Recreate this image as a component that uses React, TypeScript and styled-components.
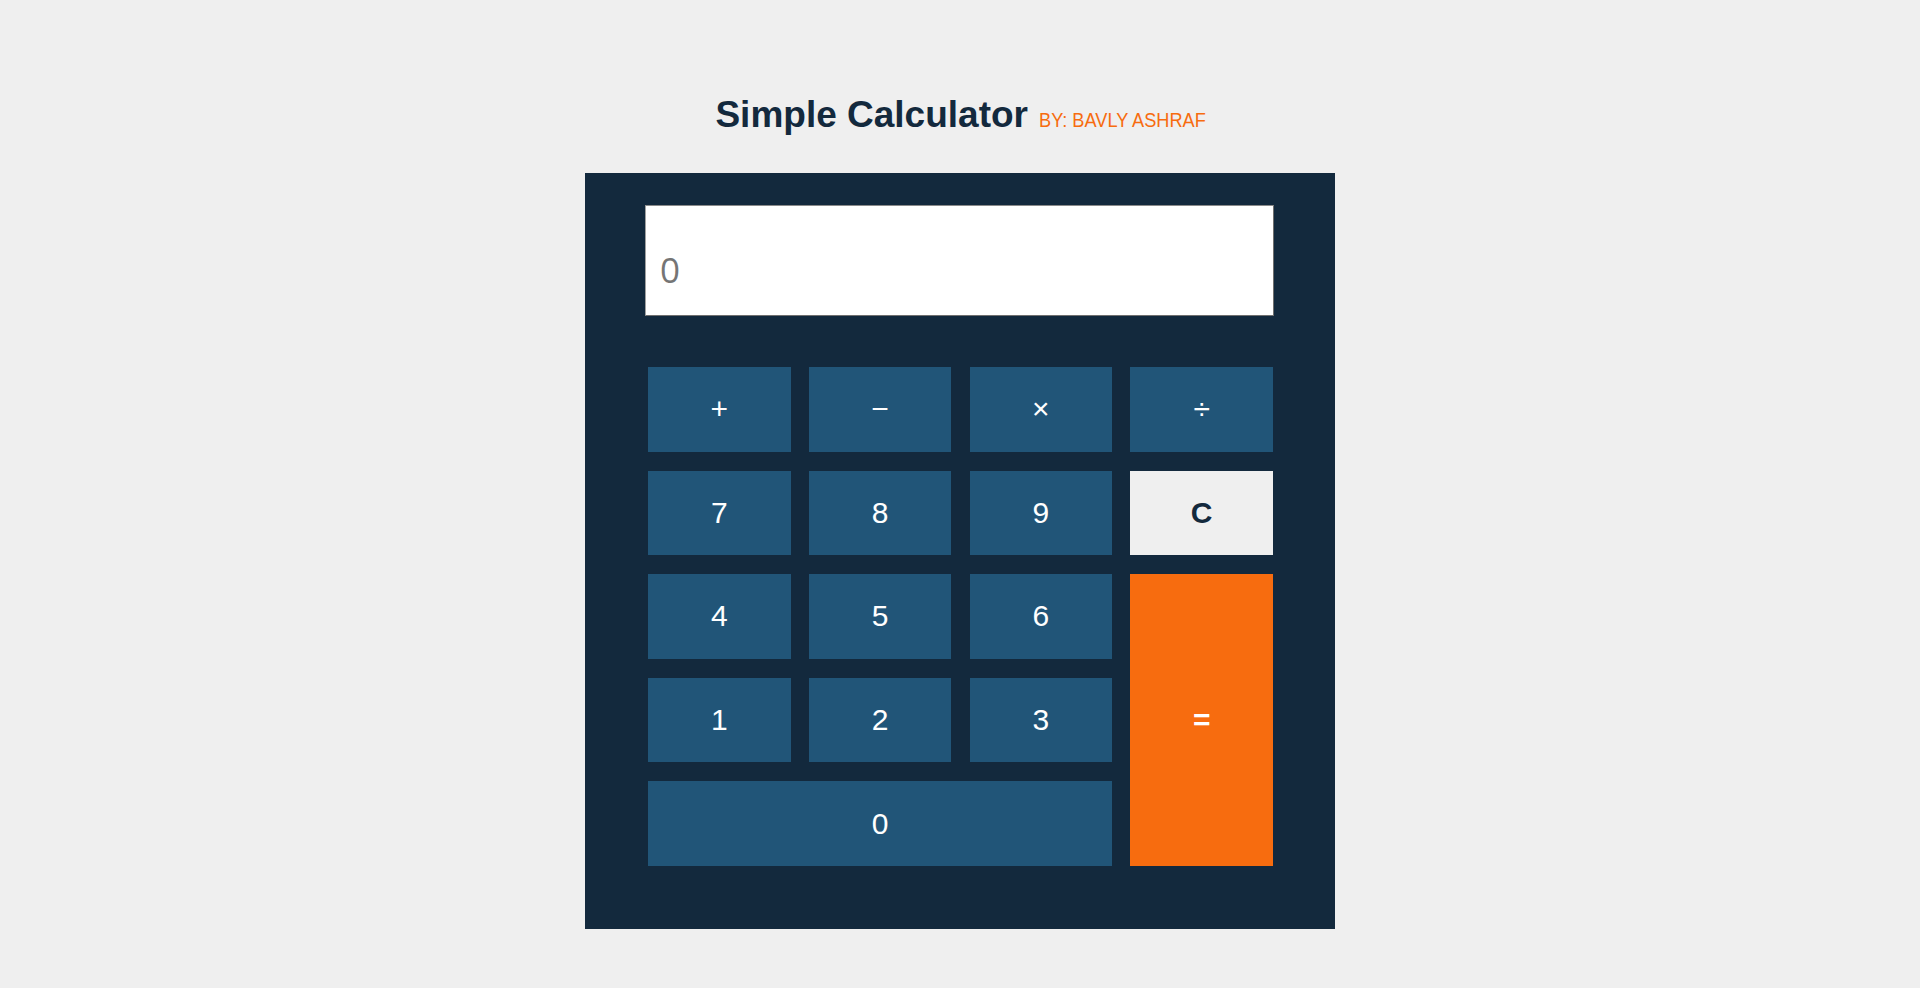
import React from "react";
import styled, { createGlobalStyle } from "styled-components";

const Global = createGlobalStyle`
  html, body { margin: 0; padding: 0; background: #efefef; }
  body { font-family: "Liberation Sans", Arial, sans-serif; }
  * { box-sizing: border-box; }
`;

const Page = styled.main`
  display: flex;
  flex-direction: column;
  align-items: center;
  padding-top: 93px;
  min-height: 988px;
`;

const Title = styled.h1`
  margin: 0 0 36px;
  font-size: 37px;
  line-height: 44px;
  font-weight: 700;
  color: #13293d;
  white-space: nowrap;
`;

const Byline = styled.span`
  display: inline-block;
  margin-left: 11px;
  margin-right: -27px;
  font-family: "Liberation Sans", Arial, sans-serif;
  font-size: 21px;
  font-weight: 400;
  color: #f76c0f;
  vertical-align: 0;
  line-height: 1;
  transform: scaleX(0.866);
  transform-origin: left center;
`;

const Calculator = styled.section`
  width: 750px;
  height: 756px;
  background: #13293d;
  padding: 32px 61px 0 60px;
`;

const Display = styled.input`
  display: block;
  width: 629px;
  height: 111px;
  margin: 0 0 51px;
  padding: 18px 14px 0;
  border: 1px solid #6f6f6f;
  border-top-color: #8a8a8a;
  border-left-color: #a0a0a0;
  background: #fff;
  font-family: "Open Sans", "Liberation Sans", sans-serif;
  font-size: 35px;
  color: #222;
  outline: none;
  &::placeholder { color: #757575; }
`;

const Keypad = styled.div`
  display: grid;
  grid-template-columns: repeat(4, 142.5px);
  grid-auto-rows: 84.6px;
  column-gap: 18.3px;
  row-gap: 19px;
  margin-left: 3px;
  width: 625px;
`;

type Kind = "key" | "clear" | "equals";

const Key = styled.button<{ $kind?: Kind; $wide?: boolean; $tall?: boolean }>`
  border: none;
  margin: 0;
  padding: 0;
  display: flex;
  align-items: center;
  justify-content: center;
  font-family: "Liberation Sans", Arial, sans-serif;
  font-size: 30px;
  cursor: pointer;
  grid-column: ${(p) => (p.$wide ? "span 3" : "auto")};
  grid-row: ${(p) => (p.$tall ? "span 3" : "auto")};
  font-weight: ${(p) => (p.$kind === "clear" || p.$kind === "equals" ? 700 : 400)};
  background: ${(p) =>
    p.$kind === "clear" ? "#efefef" : p.$kind === "equals" ? "#f76c0f" : "#215578"};
  color: ${(p) => (p.$kind === "clear" ? "#13293d" : "#ffffff")};
`;

export default function App() {
  return (
    <>
      <Global />
      <Page>
        <Title>
          Simple Calculator<Byline>BY: BAVLY ASHRAF</Byline>
        </Title>
        <Calculator>
          <Display readOnly placeholder="0" />
          <Keypad>
            <Key>+</Key>
            <Key>−</Key>
            <Key>×</Key>
            <Key>÷</Key>
            <Key>7</Key>
            <Key>8</Key>
            <Key>9</Key>
            <Key $kind="clear">C</Key>
            <Key>4</Key>
            <Key>5</Key>
            <Key>6</Key>
            <Key $kind="equals" $tall>=</Key>
            <Key>1</Key>
            <Key>2</Key>
            <Key>3</Key>
            <Key $wide>0</Key>
          </Keypad>
        </Calculator>
      </Page>
    </>
  );
}
